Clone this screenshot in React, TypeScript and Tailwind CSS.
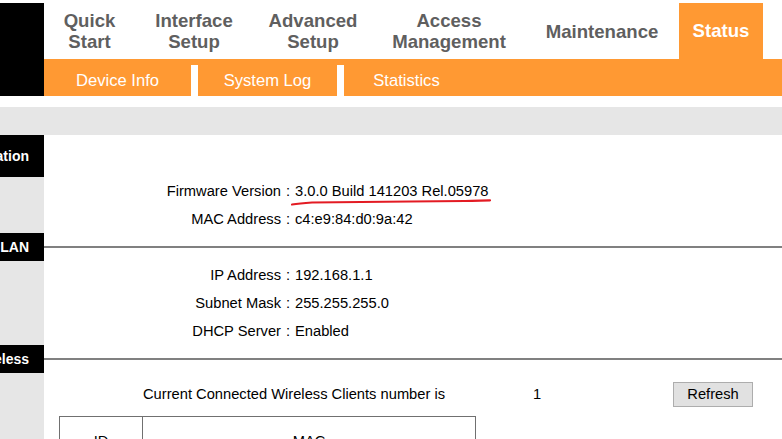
const tabs = [
  { label: ['Quick', 'Start'], w: 'w-[91px]' },
  { label: ['Interface', 'Setup'], w: 'w-[118px]' },
  { label: ['Advanced', 'Setup'], w: 'w-[120px]' },
  { label: ['Access', 'Management'], w: 'w-[152px]' },
  { label: ['Maintenance'], w: 'w-[154px]' },
];

const subTabs = [
  { label: 'Device Info', w: 'w-[147px]' },
  { label: 'System Log', w: 'w-[139px]' },
  { label: 'Statistics', w: 'w-[125px]' },
];

function SectionHeader({ title, tall, line }: { title: string; tall?: boolean; line?: boolean }) {
  return (
    <div className={`flex ${tall ? 'h-[42px]' : 'h-[28px]'}`}>
      <div className="w-[44px] bg-black overflow-hidden flex justify-end items-center pr-[15px]">
        <span className="whitespace-nowrap text-white font-bold text-[14px]">{title}</span>
      </div>
      <div className="flex-1 flex items-center">
        {line && <div className="h-[2px] w-full bg-[#808080]" />}
      </div>
    </div>
  );
}

function InfoRow({ label, value }: { label: string; value: string }) {
  return (
    <div className="flex h-[28px]">
      <div className="w-[44px] bg-[#e6e6e6]" />
      <div className="flex items-center text-[14.7px] text-black">
        <div className="w-[237px] text-right">{label}</div>
        <div className="w-[14px] text-center">:</div>
        <div>{value}</div>
      </div>
    </div>
  );
}

export default function App() {
  return (
    <div
      className="relative w-[782px] h-[439px] overflow-hidden bg-white"
      style={{ fontFamily: '"Liberation Sans", Arial, sans-serif' }}
    >
      {/* top navigation */}
      <div className="flex pt-[3px]">
        <div className="w-[44px] h-[93px] bg-black" />
        <div className="flex-1 flex flex-col">
          <div className="flex h-[56px]">
            {tabs.map((t) => (
              <div
                key={t.label.join(' ')}
                className={`${t.w} flex flex-col items-center justify-center text-[18.6px] leading-[21px] font-bold text-[#5f5f5f]`}
              >
                {t.label.map((l) => (
                  <span key={l}>{l}</span>
                ))}
              </div>
            ))}
            <div className="w-[84px] bg-[#ff9933] flex items-center justify-center text-[18.6px] font-bold text-white">
              Status
            </div>
          </div>
          <div className="h-[37px] bg-[#ff9933] pt-[6px] flex">
            {subTabs.map((s, i) => (
              <div key={s.label} className="flex h-full">
                {i > 0 && <div className="w-[7px] h-full bg-white" />}
                <div className={`${s.w} flex items-center justify-center pt-[2px] text-[16.6px] text-white`}>
                  {s.label}
                </div>
              </div>
            ))}
          </div>
        </div>
      </div>

      <div className="h-[11px]" />
      <div className="h-[28px] bg-[#e6e6e6]" />

      {/* device info */}
      <SectionHeader title="Device Information" tall />
      <InfoRow label="Firmware Version" value="3.0.0 Build 141203 Rel.05978" />
      <InfoRow label="MAC Address" value="c4:e9:84:d0:9a:42" />

      {/* LAN */}
      <SectionHeader title="LAN" line />
      <InfoRow label="IP Address" value="192.168.1.1" />
      <InfoRow label="Subnet Mask" value="255.255.255.0" />
      <InfoRow label="DHCP Server" value="Enabled" />

      {/* wireless */}
      <SectionHeader title="Wireless" line />
      <div className="flex">
        <div className="w-[44px] bg-[#e6e6e6] h-[120px]" />
        <div className="flex-1 text-[14.7px] text-black">
          <div className="flex items-center h-[25px] mt-[9px]">
            <div className="ml-[99px] w-[390px]">Current Connected Wireless Clients number is</div>
            <div className="w-[140px]">1</div>
            <button className="w-[80px] h-[25px] bg-[#e1e1e1] border border-[#adadad] text-[14.7px] text-black">
              Refresh
            </button>
          </div>
          <div className="ml-[15px] mt-[9px] w-[417px] flex h-[50px] border border-[#707070]">
            <div className="w-[83px] border-r border-[#707070] flex items-center justify-center">ID</div>
            <div className="flex-1 flex items-center justify-center">MAC</div>
          </div>
        </div>
      </div>

      {/* hand-drawn red underline */}
      <svg className="absolute left-[290px] top-[196px]" width="206" height="12" viewBox="0 0 206 12">
        <path
          d="M2 8.5 C 8 7.5, 14 7, 22 6.5 L 120 5.5 L 175 5 C 185 4.8, 192 4.5, 200 4.3"
          stroke="#e31b23"
          strokeWidth="2.2"
          fill="none"
          strokeLinecap="round"
        />
      </svg>
    </div>
  );
}
